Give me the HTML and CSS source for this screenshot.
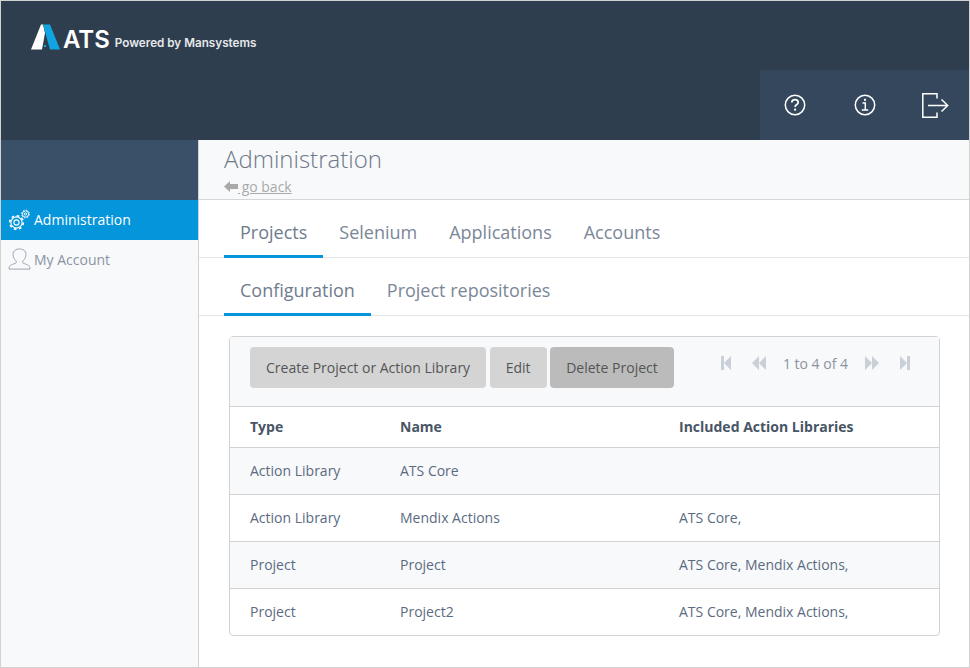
FILE: index.html
```html
<!DOCTYPE html>
<html lang="en">
<head>
<meta charset="utf-8">
<title>ATS Administration</title>
<link rel="stylesheet" href="styles.css">
</head>
<body>
<div class="app">
  <header class="header">
    <div class="brand">
      <svg class="logo" width="29" height="26" viewBox="0 0 29 26"><path d="M0 25.500 L10 .5 H12 L14 9 L11 25.500 Z" fill="#fff"/><path d="M12 .5 H19 L29 25.500 H19 Z" fill="#10a5e0"/><rect x="13" y="21" width="2" height="2" fill="#10a5e0"/></svg>
      <span class="brand-name">ATS</span>
      <span class="brand-sub">Powered by Mansystems</span>
    </div>
    <div class="header-actions">
      <svg class="act" width="22" height="22" viewBox="0 0 22 22"><circle cx="11" cy="11" r="9.700" fill="none" stroke="#fff" stroke-width="1.500"/><path d="M7.800 8.600 C7.800 6.600 9.300 5.700 11 5.700 C12.800 5.700 14.200 6.800 14.200 8.400 C14.200 10.500 11.100 10.600 11.100 13" fill="none" stroke="#fff" stroke-width="1.700"/><rect x="10.100" y="14.600" width="2" height="2" fill="#fff"/></svg>
      <svg class="act" width="22" height="22" viewBox="0 0 22 22"><circle cx="11" cy="11" r="9.700" fill="none" stroke="#fff" stroke-width="1.500"/><rect x="10" y="4.800" width="2" height="2" fill="#fff"/><path d="M8.500 9 H11.300 V15.800 M7.800 16 H14.200" fill="none" stroke="#fff" stroke-width="1.500"/></svg>
      <svg class="act exit" width="27" height="25" viewBox="0 0 27 25"><path d="M15 5.500 V.8 H.8 V24.200 H15 V19.500" fill="none" stroke="#fff" stroke-width="1.500"/><path d="M6 12.500 H25.500 M19.500 6.500 L25.700 12.500 L19.500 18.500" fill="none" stroke="#fff" stroke-width="1.500"/></svg>
    </div>
  </header>
  <div class="body">
    <nav class="sidebar">
      <div class="side-top"></div>
      <a class="side-item active">
        <svg class="side-icon" width="23" height="22" viewBox="0 0 23 22" fill="none" stroke="#fff"><circle cx="8.500" cy="14.500" r="2.600" stroke-width="1.100"/><circle cx="8.500" cy="14.500" r="6.800" stroke-width="1.600" stroke-dasharray="2.670 2.670"/><circle cx="8.500" cy="14.500" r="5.600" stroke-width="1.100"/><circle cx="17.500" cy="6" r="1.200" stroke-width=".9"/><circle cx="17.500" cy="6" r="3.900" stroke-width="1" stroke-dasharray="1.530 1.530"/><circle cx="17.500" cy="6" r="3.100" stroke-width=".9"/></svg>
        Administration
      </a>
      <a class="side-item">
        <svg class="side-icon" width="23" height="22" viewBox="0 0 23 24" preserveAspectRatio="none" fill="none" stroke="#9aa3b0" stroke-width="1"><path d="M1 23 C1 19 3 18.200 7 17 C8.500 16.500 8.500 15.500 8 14 C6 12 5 9.500 5 7 C5 3 8 1 11.500 1 C15 1 18 3 18 7 C18 9.500 17 12 15 14 C14.500 15.500 14.500 16.500 16 17 C20 18.200 22 19 22 23 Z"/></svg>
        My Account
      </a>
    </nav>
    <main class="main">
      <div class="page-head">
        <h1 class="page-title">Administration</h1>
        <a class="back"><svg class="back-arrow" width="15" height="11" viewBox="0 0 15 11"><path d="M0 5.500 L6 0 V3 H14 V8 H6 V11 Z" fill="#a9a9a9"/></svg><span class="back-text"> go back</span></a>
      </div>
      <div class="tabs">
        <a class="tab selected">Projects</a>
        <a class="tab">Selenium</a>
        <a class="tab">Applications</a>
        <a class="tab">Accounts</a>
      </div>
      <div class="tabs">
        <a class="tab selected">Configuration</a>
        <a class="tab">Project repositories</a>
      </div>
      <section class="grid">
        <div class="toolbar">
          <div class="buttons">
            <button class="btn">Create Project or Action Library</button>
            <button class="btn">Edit</button>
            <button class="btn btn-dark">Delete Project</button>
          </div>
          <div class="pager">
            <svg width="10" height="14" viewBox="0 0 10 14"><path d="M0 0H3V14H0ZM3 7 L10 0 V14Z" fill="#c9d0d8"/></svg>
            <svg class="pg-gap" width="14" height="14" viewBox="0 0 14 14"><path d="M0 7 L7 0 V14Z M7 7 L14 0 V14Z" fill="#c9d0d8"/></svg>
            <span class="pg-text">1 to 4 of 4</span>
            <svg width="14" height="14" viewBox="0 0 14 14"><path d="M14 7 L7 0 V14Z M7 7 L0 0 V14Z" fill="#c9d0d8"/></svg>
            <svg class="pg-gap" width="10" height="14" viewBox="0 0 10 14"><path d="M10 0H7V14H10ZM7 7 L0 0 V14Z" fill="#c9d0d8"/></svg>
          </div>
        </div>
        <div class="row row-head"><div>Type</div><div>Name</div><div>Included Action Libraries</div></div>
        <div class="row alt"><div>Action Library</div><div>ATS Core</div><div></div></div>
        <div class="row"><div>Action Library</div><div>Mendix Actions</div><div>ATS Core,</div></div>
        <div class="row alt"><div>Project</div><div>Project</div><div>ATS Core, Mendix Actions,</div></div>
        <div class="row"><div>Project</div><div>Project2</div><div>ATS Core, Mendix Actions,</div></div>
      </section>
    </main>
  </div>
</div>
</body>
</html>
```
FILE: styles.css
```css
* { box-sizing: border-box; }
html, body { margin: 0; padding: 0; }
body { font-family: "Open Sans", sans-serif; font-size: 14px; color: #555; background: #fff; }
.app { width: 970px; height: 668px; border: 1px solid #d2d2d2; display: flex; flex-direction: column; overflow: hidden; }

.header { height: 139px; flex: none; background: #2f3e4e; display: flex; justify-content: space-between; }
.brand { display: flex; align-items: center; height: 26px; margin: 23px 0 0 30px; color: #fff; }
.logo { flex: none; }
.brand-name { font-family: Inter, sans-serif; font-size: 24px; font-weight: 600; margin: 5px 0 0 3px; }
.brand-sub { font-family: Inter, sans-serif; font-size: 11.700px; font-weight: 600; margin: 12px 0 0 5px; color: #e6e9ec; }
.header-actions { align-self: flex-end; width: 209px; height: 70px; background: #34475c; display: flex; align-items: center; padding-left: 24px; }
.act { flex: none; margin-right: 48px; }
.exit { margin: 0 0 0 -2px; }

.body { flex: 1; display: flex; min-height: 0; }
.sidebar { width: 198px; flex: none; background: #f8f9fb; border-right: 1px solid #d2d2d2; }
.side-top { height: 60px; background: #3a5068; }
.side-item { height: 40px; display: flex; align-items: center; gap: 3px; padding: 0 0 2px 7px; font-size: 14px; color: #8a93a3; }
.side-item.active { background: #0595db; color: #fff; }
.side-icon { flex: none; }

.main { flex: 1; min-width: 0; background: #fff; }
.page-head { height: 60px; background: #f8f9fb; border-bottom: 1px solid #d7d7d7; padding: 4px 0 0 25px; }
.page-title { margin: 0; font-size: 24px; font-weight: 300; line-height: 30px; color: #6d7889; }
.back { display: flex; align-items: center; height: 20px; margin-top: 2px; font-size: 14px; color: #a9a9a9; }
.back-arrow { flex: none; }
.back-text { text-decoration: underline; white-space: pre; margin-left: -1px; }

.tabs { height: 58px; display: flex; padding-left: 25px; border-bottom: 1px solid #e6e6e6; }
.tab { height: 58px; padding: 0 16px; font-size: 18px; line-height: 64px; color: #7b8798; }
.tab.selected { border-bottom: 3px solid #0595db; color: #6f7c8e; }

.grid { margin: 20px 29px 0 30px; border: 1px solid #d2d2d2; border-radius: 4px; }
.toolbar { height: 70px; background: #f8f9fb; border-bottom: 1px solid #d2d2d2; display: flex; justify-content: space-between; padding: 10px 20px; }
.buttons { display: flex; gap: 3.600px; align-items: flex-start; }
.btn { height: 41px; padding: 0 16px; border: 0; border-radius: 4px; background: #d4d4d4; font: 14px "Open Sans", sans-serif; color: #555; }
.btn-dark { background: #bbb; }
.pager { display: flex; align-items: center; height: 32px; padding-right: 9px; gap: 0; }
.pager svg { flex: none; }
.pg-gap { margin-left: 21px; }
.pg-text { font-size: 14px; color: #8a93a3; margin: 0 17px 0 17px; }

.row { display: grid; grid-template-columns: 150px 279px 1fr; align-items: center; height: 47px; padding: 0 0 2px 20px; border-bottom: 1px solid #d2d2d2; font-size: 14px; color: #5b6b7f; }
.row:last-child { border-bottom: 0; height: 46px; }
.row.alt { background: #f8f9fb; }
.row-head { height: 41px; font-weight: 700; color: #485565; }
```
